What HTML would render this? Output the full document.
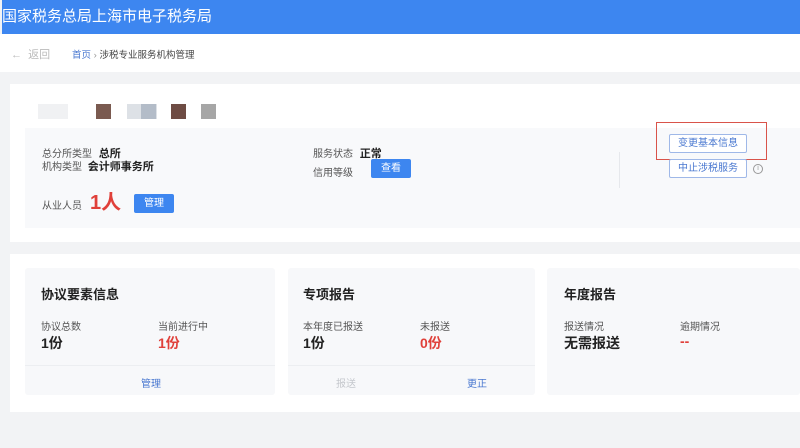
<!DOCTYPE html>
<html><head><meta charset="utf-8"><style>
*{margin:0;padding:0;box-sizing:border-box}
body{width:800px;height:448px;overflow:hidden;background:#f2f3f5;font-family:"Liberation Sans","Noto Sans CJK SC",sans-serif;position:relative;color:#333}
.a{position:absolute;white-space:nowrap}
.hdr{left:2px;top:0;width:798px;height:34px;background:#3d86f0;color:#fff;font-size:15px;line-height:34px;padding-left:0}
.bc{left:0;top:34px;width:800px;height:38px;background:#fff}
.btn{background:#3d86f0;color:#fff;font-size:10px;text-align:center;border-radius:2px}
.obtn{border:1px solid #9fb8e8;color:#4a78d0;font-size:10px;text-align:center;background:#fff;border-radius:2px}
.card{background:#f7f8fa;border-radius:3px}
.lbl{font-size:10px;color:#555}
.val{font-size:14px;font-weight:bold;color:#222}
.red{color:#e0403a}
.lnk{font-size:10px;color:#4a78d0}
</style></head><body>
<div class="a hdr">国家税务总局上海市电子税务局</div>
<div class="a bc"></div>
<div class="a" style="left:11px;top:46px;font-size:11px;color:#bbb">←&nbsp; 返回</div>
<div class="a" style="left:72px;top:47px;font-size:9.5px;color:#4a78d0">首页 <span style="color:#999">›</span> <span style="color:#444">涉税专业服务机构管理</span></div>

<div class="a" style="left:10px;top:84px;width:790px;height:158px;background:#fff"></div>
<div class="a" style="left:38px;top:104px;width:30px;height:15px;background:#f0f1f3"></div>
<div class="a" style="left:96px;top:104px;width:15px;height:15px;background:#7a5a50"></div>
<div class="a" style="left:127px;top:104px;width:30px;height:15px;background:#dde1e6"></div>
<div class="a" style="left:141px;top:104px;width:15px;height:15px;background:#b3bcc8"></div>
<div class="a" style="left:171px;top:104px;width:15px;height:15px;background:#6e4c44"></div>
<div class="a" style="left:201px;top:104px;width:15px;height:15px;background:#a6a6a6"></div>
<div class="a" style="left:25px;top:128px;width:775px;height:100px;background:#f8f9fb"></div>
<div class="a lbl" style="left:42px;top:145px">总分所类型 <b style="font-size:11px;color:#222;margin-left:4px">总所</b></div>
<div class="a lbl" style="left:42px;top:158px">机构类型 <b style="font-size:11px;color:#222;margin-left:3px">会计师事务所</b></div>
<div class="a lbl" style="left:42px;top:197px">从业人员</div>
<div class="a red" style="left:90px;top:186px;font-size:20px;font-weight:bold">1人</div>
<div class="a btn" style="left:134px;top:194px;width:40px;height:19px;line-height:19px">管理</div>
<div class="a lbl" style="left:313px;top:145px">服务状态 <b style="font-size:11px;color:#222;margin-left:4px">正常</b></div>
<div class="a lbl" style="left:313px;top:164px">信用等级</div>
<div class="a btn" style="left:371px;top:159px;width:40px;height:19px;line-height:19px">查看</div>
<div class="a" style="left:619px;top:152px;width:1px;height:36px;background:#e6e8ec"></div>
<div class="a obtn" style="left:669px;top:134px;width:78px;height:19px;line-height:17px">变更基本信息</div>
<div class="a" style="left:656px;top:122px;width:111px;height:38px;border:1.5px solid #d9534a"></div>
<div class="a obtn" style="left:669px;top:159px;width:78px;height:19px;line-height:17px">中止涉税服务</div>
<div class="a" style="left:753px;top:164px;width:10px;height:10px;border:1px solid #999;border-radius:50%;font-size:7px;line-height:8px;text-align:center;color:#999">i</div>

<div class="a" style="left:10px;top:254px;width:790px;height:158px;background:#fff"></div>
<div class="a card" style="left:25px;top:268px;width:250px;height:127px"></div>
<div class="a card" style="left:288px;top:268px;width:247px;height:127px"></div>
<div class="a card" style="left:547px;top:268px;width:253px;height:127px"></div>
<div class="a" style="left:25px;top:365px;width:250px;height:1px;background:#eceef1"></div>
<div class="a" style="left:288px;top:365px;width:247px;height:1px;background:#eceef1"></div>

<div class="a" style="left:41px;top:284px;font-size:13px;font-weight:bold;color:#222">协议要素信息</div>
<div class="a lbl" style="left:41px;top:318px">协议总数</div>
<div class="a lbl" style="left:158px;top:318px">当前进行中</div>
<div class="a val" style="left:41px;top:333px">1份</div>
<div class="a val red" style="left:158px;top:333px">1份</div>
<div class="a lnk" style="left:141px;top:375px">管理</div>

<div class="a" style="left:303px;top:284px;font-size:13px;font-weight:bold;color:#222">专项报告</div>
<div class="a lbl" style="left:303px;top:318px">本年度已报送</div>
<div class="a lbl" style="left:420px;top:318px">未报送</div>
<div class="a val" style="left:303px;top:333px">1份</div>
<div class="a val red" style="left:420px;top:333px">0份</div>
<div class="a lnk" style="left:336px;top:375px;color:#c5c8cd">报送</div>
<div class="a lnk" style="left:467px;top:375px">更正</div>

<div class="a" style="left:564px;top:284px;font-size:13px;font-weight:bold;color:#222">年度报告</div>
<div class="a lbl" style="left:564px;top:318px">报送情况</div>
<div class="a lbl" style="left:680px;top:318px">逾期情况</div>
<div class="a val" style="left:564px;top:333px">无需报送</div>
<div class="a val red" style="left:680px;top:333px">--</div>
</body></html>
